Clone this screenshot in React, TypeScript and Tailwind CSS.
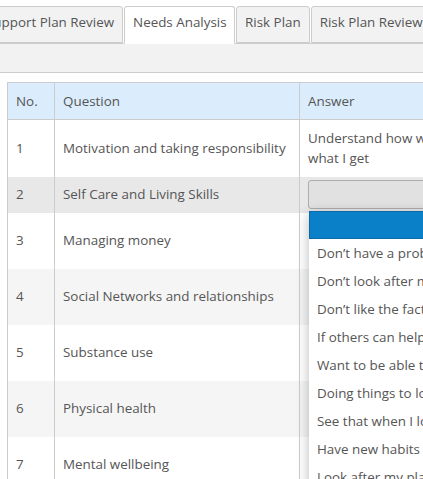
import type { FC } from 'react';

const tabs = [
  { label: 'Support Plan Review', active: false },
  { label: 'Needs Analysis', active: true },
  { label: 'Risk Plan', active: false },
  { label: 'Risk Plan Review', active: false },
];

const rows = [
  { no: 1, question: 'Motivation and taking responsibility', h: 'h-[57px]', bg: 'bg-white' },
  { no: 2, question: 'Self Care and Living Skills', h: 'h-[36px]', bg: 'bg-[#e8e8e8]' },
  { no: 3, question: 'Managing money', h: 'h-[56px]', bg: 'bg-white' },
  { no: 4, question: 'Social Networks and relationships', h: 'h-[56px]', bg: 'bg-[#f5f5f5]' },
  { no: 5, question: 'Substance use', h: 'h-[56px]', bg: 'bg-white' },
  { no: 6, question: 'Physical health', h: 'h-[56px]', bg: 'bg-[#f5f5f5]' },
  { no: 7, question: 'Mental wellbeing', h: 'h-[56px]', bg: 'bg-white' },
];

const options = [
  'Don’t have a problem with looking after myself',
  'Don’t look after myself well',
  'Don’t like the fact I cannot look after myself',
  'If others can help me I will try',
  'Want to be able to look after myself',
  'Doing things to look after myself',
  'See that when I look after myself I feel better',
  'Have new habits for looking after myself',
  'Look after my place and myself',
];

// Open dropdown list under the select in row 2
const Dropdown: FC = () => (
  <div className="absolute left-[1px] top-[31px] z-10 w-[260px] bg-white shadow-[0_3px_12px_rgba(0,0,0,0.28)]">
    <div className="h-[28px] border border-[#0b6aa8] bg-[#0a80c8]" />
    {options.map((o) => (
      <div key={o} className="flex h-[28px] items-center whitespace-nowrap px-[8px] text-[#555]">
        {o}
      </div>
    ))}
  </div>
);

const App: FC = () => {
  return (
    <div className="h-[479px] w-[423px] overflow-hidden bg-white font-['Open_Sans',sans-serif] text-[13.4px] text-[#555]">
      {/* Tabs */}
      <div className="flex items-end border-b border-[#ccc] pt-[6px]">
        <div className="-ml-[23px] flex shrink-0 items-end">
          {tabs.map((t) => (
            <div
              key={t.label}
              className={`mr-[1px] flex shrink-0 items-center whitespace-nowrap rounded-t-[3px] border border-[#ccc] px-[8px] pb-[5px] ${
                t.active ? '-mb-px h-[38px] w-[111px] border-b-white bg-white' : 'h-[37px] bg-[#f2f2f2]'
              }`}
            >
              {t.label}
            </div>
          ))}
        </div>
      </div>

      {/* Toolbar strip */}
      <div className="h-[29px] border-b border-[#ccc] bg-[#f2f2f2]" />

      {/* Table */}
      <div className="ml-[7px] mt-[9px]">
        <table className="w-[560px] table-fixed border-collapse">
          <colgroup>
            <col className="w-[47px]" />
            <col className="w-[245px]" />
            <col />
          </colgroup>
          <thead>
            <tr className="h-[37px] bg-[#dbedfc]">
              <th className="border border-[#ccc] px-[8px] text-left font-normal">No.</th>
              <th className="border border-[#ccc] px-[8px] text-left font-normal">Question</th>
              <th className="border border-[#ccc] px-[8px] text-left font-normal">Answer</th>
            </tr>
          </thead>
          <tbody>
            {rows.map((r) => (
              <tr key={r.no} className={`${r.h} ${r.bg}`}>
                <td className="border-x border-[#ccc] px-[8px] align-middle">{r.no}</td>
                <td className="whitespace-nowrap border-x border-[#ccc] px-[8px] align-middle">{r.question}</td>
                <td className="border-x border-[#ccc] px-[8px] align-middle">
                  {r.no === 1 && (
                    <div className="leading-[20px]">
                      Understand how what I do affects
                      <br />
                      what I get
                    </div>
                  )}
                  {r.no === 2 && (
                    <div className="relative">
                      <div className="h-[29px] w-[260px] rounded-[3px] border border-[#adadad] bg-[#e1e1e1]" />
                      <Dropdown />
                    </div>
                  )}
                </td>
              </tr>
            ))}
          </tbody>
        </table>
      </div>
    </div>
  );
};

export default App;
